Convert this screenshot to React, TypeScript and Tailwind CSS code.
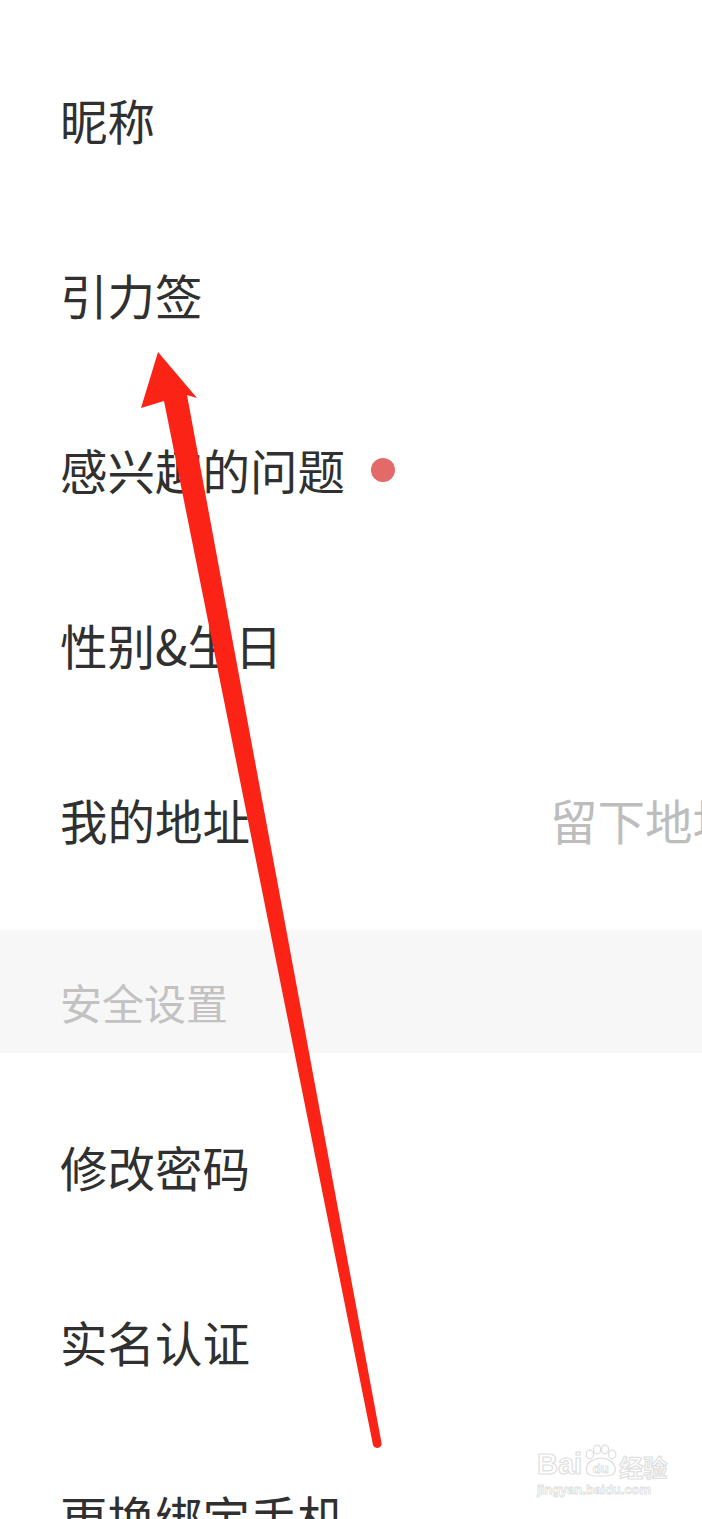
import React from "react";

const font = { fontFamily: '"Noto Sans CJK SC", "Noto Sans", sans-serif' };

function Row({ children }: { children: React.ReactNode }) {
  return (
    <div className="flex h-[175px] items-center overflow-hidden whitespace-nowrap pl-[60px] text-[47.5px] leading-none text-[#303030]">
      {children}
    </div>
  );
}

export default function App() {
  return (
    <div className="relative h-[1519px] w-[702px] overflow-hidden bg-white" style={font}>
      <div className="flex flex-col pt-[32px]">
        <Row>昵称</Row>
        <Row>引力签</Row>
        <Row>
          <span>感兴趣的问题</span>
          <span className="ml-[26px] h-[24px] w-[24px] shrink-0 rounded-full bg-[#e46a6a]" />
        </Row>
        <Row>性别&amp;生日</Row>
        <Row>
          <span className="w-[490px] shrink-0">我的地址</span>
          <span className="shrink-0 text-[#bdbdbd]">留下地址</span>
        </Row>
        <div className="mt-[23px] h-[123px] bg-[#f7f7f7] pl-[60px] pt-[51px] text-[42px] leading-none text-[#c2c2c2]">
          安全设置
        </div>
        <div className="mt-[26px] flex flex-col">
          <Row>修改密码</Row>
          <Row>实名认证</Row>
          <Row>更换绑定手机</Row>
        </div>
      </div>

      {/* Baidu watermark */}
      <div className="pointer-events-none absolute left-[537px] top-[1442px] flex flex-col items-start">
        <div className="flex items-end">
          <span
            className="text-[29px] font-bold leading-none text-white [-webkit-text-stroke:1.2px_#e0e0e0]"
            style={{ fontFamily: '"Liberation Sans", sans-serif' }}
          >
            Bai
          </span>
          <svg width="36" height="38" viewBox="0 0 50 46" className="-mb-[1px]">
            <g fill="white" stroke="#e0e0e0" strokeWidth="1.8">
              <ellipse cx="11" cy="14" rx="5" ry="6" />
              <ellipse cx="21" cy="7" rx="5" ry="6" />
              <ellipse cx="32" cy="7" rx="5" ry="6" />
              <ellipse cx="42" cy="14" rx="5" ry="6" />
              <path d="M6 35 C6 24 17 19 26 19 C35 19 46 24 46 35 C46 42 40 44 26 44 C12 44 6 42 6 35 Z" />
            </g>
            <text
              x="26"
              y="39"
              textAnchor="middle"
              fontSize="18"
              fontWeight="bold"
              fill="white"
              stroke="#e0e0e0"
              strokeWidth="1.2"
              fontFamily="Liberation Sans, sans-serif"
            >
              du
            </text>
          </svg>
          <span className="ml-[1px] text-[24px] font-bold leading-none text-white [-webkit-text-stroke:1.2px_#e0e0e0]">
            经验
          </span>
        </div>
        <span
          className="mt-[4px] text-[13px] font-bold leading-none text-white [-webkit-text-stroke:0.8px_#e0e0e0]"
          style={{ fontFamily: '"Liberation Sans", sans-serif' }}
        >
          jingyan.baidu.com
        </span>
      </div>

      {/* red annotation arrow */}
      <svg className="pointer-events-none absolute left-0 top-0" width="702" height="1519" viewBox="0 0 702 1519">
        <path
          d="M158 352 L197 398 L187 395 L381.5 1443 A4.4 4.4 0 0 1 373 1445 L164 401 L141 408 Z"
          fill="#fb2216"
        />
      </svg>
    </div>
  );
}
